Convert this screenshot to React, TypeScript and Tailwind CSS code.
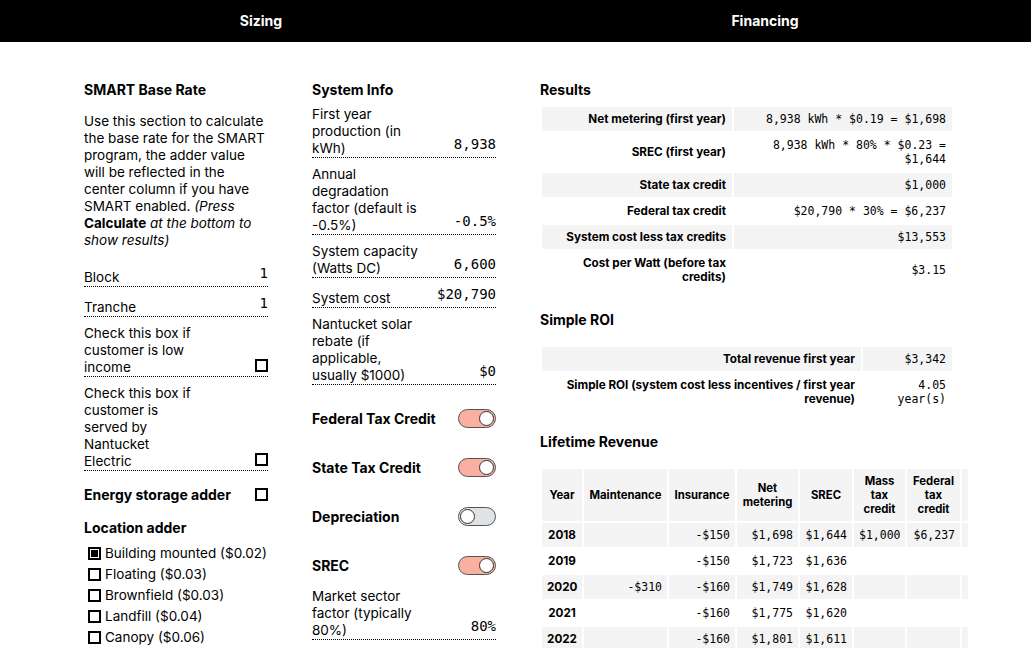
// Solar calculator — Sizing / Financing view
import React from 'react';

const MONO = "font-['DejaVu_Sans_Mono',monospace]";

interface ResultRow {
  label: string;
  value: string;
}

const results: ResultRow[] = [
  { label: 'Net metering (first year)', value: '8,938 kWh * $0.19 = $1,698' },
  { label: 'SREC (first year)', value: '8,938 kWh * 80% * $0.23 = $1,644' },
  { label: 'State tax credit', value: '$1,000' },
  { label: 'Federal tax credit', value: '$20,790 * 30% = $6,237' },
  { label: 'System cost less tax credits', value: '$13,553' },
  { label: 'Cost per Watt (before tax credits)', value: '$3.15' },
];

const roi: ResultRow[] = [
  { label: 'Total revenue first year', value: '$3,342' },
  { label: 'Simple ROI (system cost less incentives / first year revenue)', value: '4.05 year(s)' },
];

// header label + column width (table is fixed layout, wider than its clipping box)
const lifetimeHead = [
  { label: 'Year', w: 'w-[40px]' },
  { label: 'Maintenance', w: 'w-[83px]' },
  { label: 'Insurance', w: 'w-[66px]' },
  { label: 'Net metering', w: 'w-[61px]' },
  { label: 'SREC', w: 'w-[52px]' },
  { label: 'Mass tax credit', w: 'w-[51px]' },
  { label: 'Federal tax credit', w: 'w-[53px]' },
  { label: 'Total', w: 'w-[60px]' },
];

const lifetime: string[][] = [
  ['2018', '', '-$150', '$1,698', '$1,644', '$1,000', '$6,237', '$10,429'],
  ['2019', '', '-$150', '$1,723', '$1,636', '', '', '$3,209'],
  ['2020', '-$310', '-$160', '$1,749', '$1,628', '', '', '$2,907'],
  ['2021', '', '-$160', '$1,775', '$1,620', '', '', '$3,235'],
  ['2022', '', '-$160', '$1,801', '$1,611', '', '', '$3,252'],
];

const locations = [
  { label: 'Building mounted ($0.02)', checked: true },
  { label: 'Floating ($0.03)', checked: false },
  { label: 'Brownfield ($0.03)', checked: false },
  { label: 'Landfill ($0.04)', checked: false },
  { label: 'Canopy ($0.06)', checked: false },
];

function Checkbox({ checked = false }: { checked?: boolean }) {
  return (
    <span className="flex h-[13px] w-[13px] shrink-0 items-center justify-center border-2 border-black bg-white">
      {checked && <span className="h-[7px] w-[7px] bg-black" />}
    </span>
  );
}

function Toggle({ on }: { on: boolean }) {
  return (
    <span
      className={
        on
          ? 'flex h-[19px] w-[38px] items-center justify-end rounded-full border border-[#555] bg-[#f9b0a0] p-[1px]'
          : 'flex h-[19px] w-[38px] items-center justify-start rounded-full border border-[#555] bg-[#dfe3e6] p-[1px]'
      }
    >
      <span className="h-[15px] w-[15px] rounded-full border-[1.5px] border-[#333] bg-white" />
    </span>
  );
}

// dotted-underlined input row: label on the left, mono value (or checkbox) on the right
function Field({ label, value, first, children }: { label: string; value?: string; first?: boolean; children?: React.ReactNode }) {
  return (
    <div className={`${first ? 'mt-[16px]' : 'mt-2'} flex items-end justify-between border-b border-dotted border-black`}>
      <span className="w-[114px] text-[13.5px] leading-[17px]">{label}</span>
      {value && <span className={`${MONO} pb-1 text-[14px] leading-[17px]`}>{value}</span>}
      {children}
    </div>
  );
}

function ToggleRow({ label, on, gap }: { label: string; on: boolean; gap: string }) {
  return (
    <div className={`${gap} flex h-[20px] items-center justify-between`}>
      <span className="text-[14px] font-bold">{label}</span>
      <Toggle on={on} />
    </div>
  );
}

function ResultTable({ rows, labelWidth }: { rows: ResultRow[]; labelWidth: string }) {
  return (
    <table className="w-[414px] table-fixed border-separate border-spacing-[2px]">
      <tbody>
        {rows.map((r, i) => (
          <tr key={r.label} className={i % 2 === 0 ? 'bg-[#f4f4f4]' : ''}>
            <td className={`${i === 0 ? labelWidth : ''} px-[6px] py-[5px] text-right text-[11.7px] font-bold leading-[14px]`}>{r.label}</td>
            <td className={`${MONO} px-[6px] py-[5px] text-right text-[11.5px] leading-[14px]`}>{r.value}</td>
          </tr>
        ))}
      </tbody>
    </table>
  );
}

export default function App() {
  return (
    <div className="min-h-screen bg-white font-['Inter',sans-serif] text-black">
      <nav className="flex h-[42px] bg-black text-[14px] font-bold text-white">
        <div className="flex w-[522px] items-center justify-center pb-[2px]">Sizing</div>
        <div className="flex w-[486px] items-center justify-center pb-[2px]">Financing</div>
      </nav>

      <main className="flex gap-[44px] pl-[84px] pt-[39px]">
        {/* SMART base rate */}
        <section className="w-[184px] shrink-0">
          <h2 className="text-[14px] font-bold leading-[17px]">SMART Base Rate</h2>
          <p className="mt-[15px] text-[13.5px] leading-[17px]">
            Use this section to calculate the base rate for the SMART program, the adder value will be reflected in the
            center column if you have SMART enabled.{' '}
            <i>
              (Press <b className="not-italic">Calculate</b> at the bottom to show results)
            </i>
          </p>
          <Field label="Block" value="1" first />
          <Field label="Tranche" value="1" />
          <Field label="Check this box if customer is low income">
            <span className="mb-1">
              <Checkbox />
            </span>
          </Field>
          <Field label="Check this box if customer is served by Nantucket Electric">
            <span className="mb-1">
              <Checkbox />
            </span>
          </Field>

          <div className="mt-[15px] flex items-center justify-between">
            <span className="text-[14px] font-bold leading-[17px]">Energy storage adder</span>
            <Checkbox />
          </div>

          <h3 className="mt-[16px] text-[14px] font-bold leading-[17px]">Location adder</h3>
          <ul className="mt-[7px] pl-[4px]">
            {locations.map(l => (
              <li key={l.label} className="flex h-[21px] items-center gap-[4px] whitespace-nowrap text-[13.5px]">
                <Checkbox checked={l.checked} />
                {l.label}
              </li>
            ))}
          </ul>
        </section>

        {/* System info */}
        <section className="w-[184px] shrink-0">
          <h2 className="text-[14px] font-bold leading-[17px]">System Info</h2>
          <div className="mt-[-8px]">
            <Field label="First year production (in kWh)" value="8,938" first />
            <Field label="Annual degradation factor (default is -0.5%)" value="-0.5%" />
            <Field label="System capacity (Watts DC)" value="6,600" />
            <Field label="System cost" value="$20,790" />
            <Field label="Nantucket solar rebate (if applicable, usually $1000)" value="$0" />
          </div>

          <ToggleRow label="Federal Tax Credit" on gap="mt-[23px]" />
          <ToggleRow label="State Tax Credit" on gap="mt-[29px]" />
          <ToggleRow label="Depreciation" on={false} gap="mt-[29px]" />
          <ToggleRow label="SREC" on gap="mt-[29px]" />

          <div className="-mt-[3px]">
            <Field label="Market sector factor (typically 80%)" value="80%" first />
          </div>
        </section>

        {/* Results */}
        <section className="w-[428px] shrink-0 overflow-hidden">
          <h2 className="text-[14px] font-bold leading-[17px]">Results</h2>
          <div className="mt-[7px]">
            <ResultTable rows={results} labelWidth="w-[190px]" />
          </div>

          <h2 className="mt-[20px] text-[14px] font-bold leading-[17px]">Simple ROI</h2>
          <div className="mt-[17px]">
            <ResultTable rows={roi} labelWidth="w-[319px]" />
          </div>

          <h2 className="mt-[20px] text-[14px] font-bold leading-[17px]">Lifetime Revenue</h2>
          <div className="mt-[17px] w-[428px] overflow-hidden">
            <table className="w-[484px] table-fixed border-separate border-spacing-[2px]">
              <thead>
                <tr className="bg-[#f4f4f4]">
                  {lifetimeHead.map(h => (
                    <th key={h.label} className={`${h.w} px-[5px] py-[5px] text-center align-middle text-[11.3px] font-bold leading-[14px]`}>
                      {h.label}
                    </th>
                  ))}
                </tr>
              </thead>
              <tbody>
                {lifetime.map((row, i) => (
                  <tr key={row[0]} className={i % 2 === 0 ? 'bg-[#f4f4f4]' : ''}>
                    {row.map((cell, j) =>
                      j === 0 ? (
                        <td key={j} className="px-[5px] py-[5px] text-center text-[11.7px] font-bold leading-[14px]">
                          {cell}
                        </td>
                      ) : (
                        <td key={j} className={`${MONO} whitespace-nowrap px-[5px] py-[5px] text-right text-[11.5px] leading-[14px]`}>
                          {cell}
                        </td>
                      ),
                    )}
                  </tr>
                ))}
              </tbody>
            </table>
          </div>
        </section>
      </main>
    </div>
  );
}
